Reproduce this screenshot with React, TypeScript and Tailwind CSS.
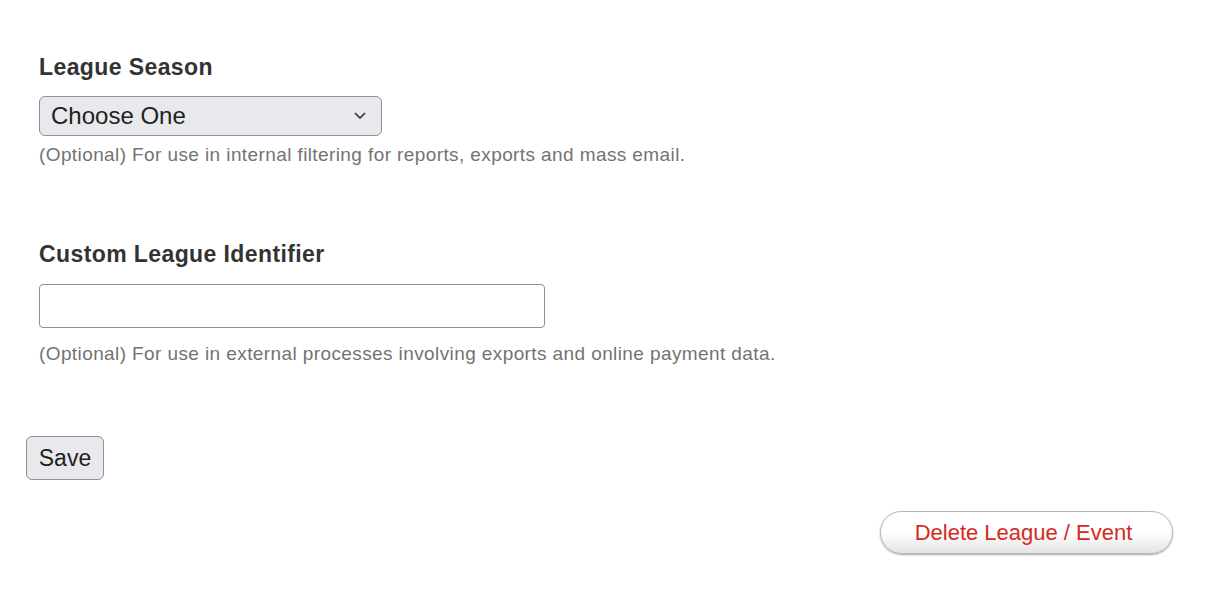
export default function App() {
  return (
    <div className="min-h-[612px] w-[1230px] bg-white font-[family-name:Liberation_Sans,Arial,sans-serif] text-[#333333]">
      <div className="px-[39px] pt-[54px]">
        <div className="mb-[75px]">
          <label className="block text-[23px] font-bold leading-[27px] tracking-[0.4px]">League Season</label>
          <div className="relative mt-[15px] w-[343px]">
            <select className="h-[40px] w-full appearance-none rounded-[6px] border-[1.5px] border-[#8f8f9d] bg-[#e9e9ed] pl-[11px] font-[family-name:Liberation_Sans,Arial,sans-serif] text-[24px] text-[#222]">
              <option>Choose One</option>
            </select>
            <svg
              className="pointer-events-none absolute right-[16px] top-[16px]"
              width="12"
              height="8"
              viewBox="0 0 12 8"
              fill="none"
            >
              <path d="M1.5 1.5L6 6L10.5 1.5" stroke="#333" strokeWidth="1.7" strokeLinecap="round" strokeLinejoin="round" />
            </svg>
          </div>
          <p className="mt-[8px] text-[19px] leading-[22px] tracking-[0.4px] text-[#737373]">
            (Optional) For use in internal filtering for reports, exports and mass email.
          </p>
        </div>

        <div>
          <label className="block text-[23px] font-bold leading-[27px] tracking-[0.4px]">Custom League Identifier</label>
          <input
            type="text"
            className="mt-[16px] block h-[44px] w-[506px] rounded-[4px] border-[1.5px] border-[#8f8f9d] bg-white px-2 text-[20px]"
          />
          <p className="mt-[15px] text-[19px] leading-[22px] tracking-[0.4px] text-[#737373]">
            (Optional) For use in external processes involving exports and online payment data.
          </p>
        </div>
      </div>

      <div className="mt-[71px] px-[26px]">
        <button className="h-[44px] w-[78px] rounded-[6px] border-[1.5px] border-[#8f8f9d] bg-[#e9e9ed] text-[23px] text-[#222]">
          Save
        </button>
      </div>

      <div className="mt-[31px] flex justify-end pr-[57px]">
        <button className="h-[43px] w-[293px] rounded-full border border-[#b5b5b5] bg-gradient-to-b from-white via-white to-[#e4e4e4] pr-[6px] text-[22px] text-[#d42a22] shadow-[0_1px_2px_rgba(0,0,0,0.35)]">
          Delete League / Event
        </button>
      </div>
    </div>
  );
}
